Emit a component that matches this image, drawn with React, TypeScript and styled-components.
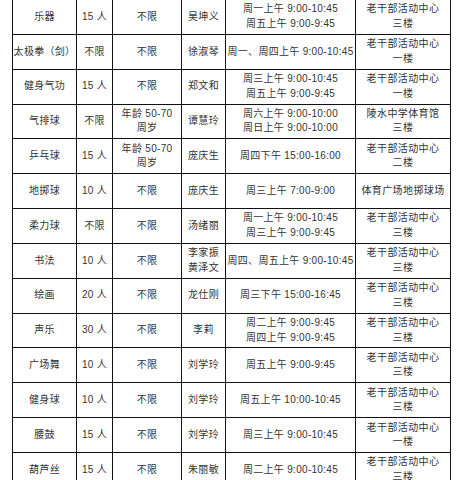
import React from 'react';
import styled, { createGlobalStyle } from 'styled-components';

type Row = {
  name: string;
  count: string;
  age: string[];
  teacher: string[];
  time: string[];
  place: string[];
};

const rows: Row[] = [
  { name: '乐器', count: '15 人', age: ['不限'], teacher: ['吴坤义'], time: ['周一上午 9:00-10:45', '周五上午 9:00-9:45'], place: ['老干部活动中心', '三楼'] },
  { name: '太极拳（剑）', count: '不限', age: ['不限'], teacher: ['徐淑琴'], time: ['周一、周四上午 9:00-10:45'], place: ['老干部活动中心', '一楼'] },
  { name: '健身气功', count: '15 人', age: ['不限'], teacher: ['郑文和'], time: ['周三上午 9:00-10:45', '周五上午 9:00-9:45'], place: ['老干部活动中心', '一楼'] },
  { name: '气排球', count: '不限', age: ['年龄 50-70', '周岁'], teacher: ['谭慧玲'], time: ['周六上午 9:00-10:00', '周日上午 9:00-10:00'], place: ['陵水中学体育馆', '三楼'] },
  { name: '乒乓球', count: '15 人', age: ['年龄 50-70', '周岁'], teacher: ['庞庆生'], time: ['周四下午 15:00-16:00'], place: ['老干部活动中心', '二楼'] },
  { name: '地掷球', count: '10 人', age: ['不限'], teacher: ['庞庆生'], time: ['周三上午 7:00-9:00'], place: ['体育广场地掷球场'] },
  { name: '柔力球', count: '不限', age: ['不限'], teacher: ['汤绪丽'], time: ['周一上午 9:00-10:45', '周三上午 9:00-9:45'], place: ['老干部活动中心', '三楼'] },
  { name: '书法', count: '10 人', age: ['不限'], teacher: ['李家振', '黄泽文'], time: ['周四、周五上午 9:00-10:45'], place: ['老干部活动中心', '三楼'] },
  { name: '绘画', count: '20 人', age: ['不限'], teacher: ['龙仕刚'], time: ['周三下午 15:00-16:45'], place: ['老干部活动中心', '三楼'] },
  { name: '声乐', count: '30 人', age: ['不限'], teacher: ['李莉'], time: ['周二上午 9:00-9:45', '周四上午 9:00-9:45'], place: ['老干部活动中心', '三楼'] },
  { name: '广场舞', count: '10 人', age: ['不限'], teacher: ['刘学玲'], time: ['周五上午 9:00-9:45'], place: ['老干部活动中心', '三楼'] },
  { name: '健身球', count: '10 人', age: ['不限'], teacher: ['刘学玲'], time: ['周五上午 10:00-10:45'], place: ['老干部活动中心', '三楼'] },
  { name: '腰鼓', count: '15 人', age: ['不限'], teacher: ['刘学玲'], time: ['周三上午 9:00-10:45'], place: ['老干部活动中心', '一楼'] },
  { name: '葫芦丝', count: '15 人', age: ['不限'], teacher: ['朱丽敏'], time: ['周二上午 9:00-10:45'], place: ['老干部活动中心', '三楼'] },
];

const colWidths = [64, 36, 69, 44, 130, 95];

const Lines = ({ items }: { items: string[] }) => (
  <>
    {items.map((t) => (
      <Line key={t}>{t}</Line>
    ))}
  </>
);

const App = () => {
  return (
    <>
      <GlobalStyle />
      <StPage>
        <StTable>
          <colgroup>
            {colWidths.map((w, i) => (
              <col key={i} style={{ width: w }} />
            ))}
          </colgroup>
          <tbody>
            {rows.map((r) => (
              <tr key={r.name}>
                <StCell>{r.name}</StCell>
                <StCell>{r.count}</StCell>
                <StCell>
                  <Lines items={r.age} />
                </StCell>
                <StCell $spaced>
                  <Lines items={r.teacher} />
                </StCell>
                <StCell>
                  <Lines items={r.time} />
                </StCell>
                <StCell $spaced>
                  <Lines items={r.place} />
                </StCell>
              </tr>
            ))}
          </tbody>
        </StTable>
      </StPage>
    </>
  );
};

const GlobalStyle = createGlobalStyle`
  html, body {
    margin: 0;
    padding: 0;
    background: #fff;
  }
`;

const StPage = styled.div`
  width: 456px;
  height: 480px;
  overflow: hidden;
  padding-left: 12px;
  box-sizing: border-box;
  font-family: 'Liberation Sans', 'Noto Sans CJK SC', sans-serif;
`;

const StTable = styled.table`
  border-collapse: collapse;
  table-layout: fixed;
  width: 439px;
  margin-top: -1px;
`;

const StCell = styled.td<{ $spaced?: boolean }>`
  border: 1px solid #111;
  height: 33.85px;
  padding: 0;
  text-align: center;
  vertical-align: middle;
  font-size: 10px;
  line-height: 14.5px;
  color: #333;
  white-space: nowrap;
  letter-spacing: ${(p) => (p.$spaced ? '0.4px' : '0.3px')};
`;

const Line = styled.div`
  display: block;
`;

export default App;
